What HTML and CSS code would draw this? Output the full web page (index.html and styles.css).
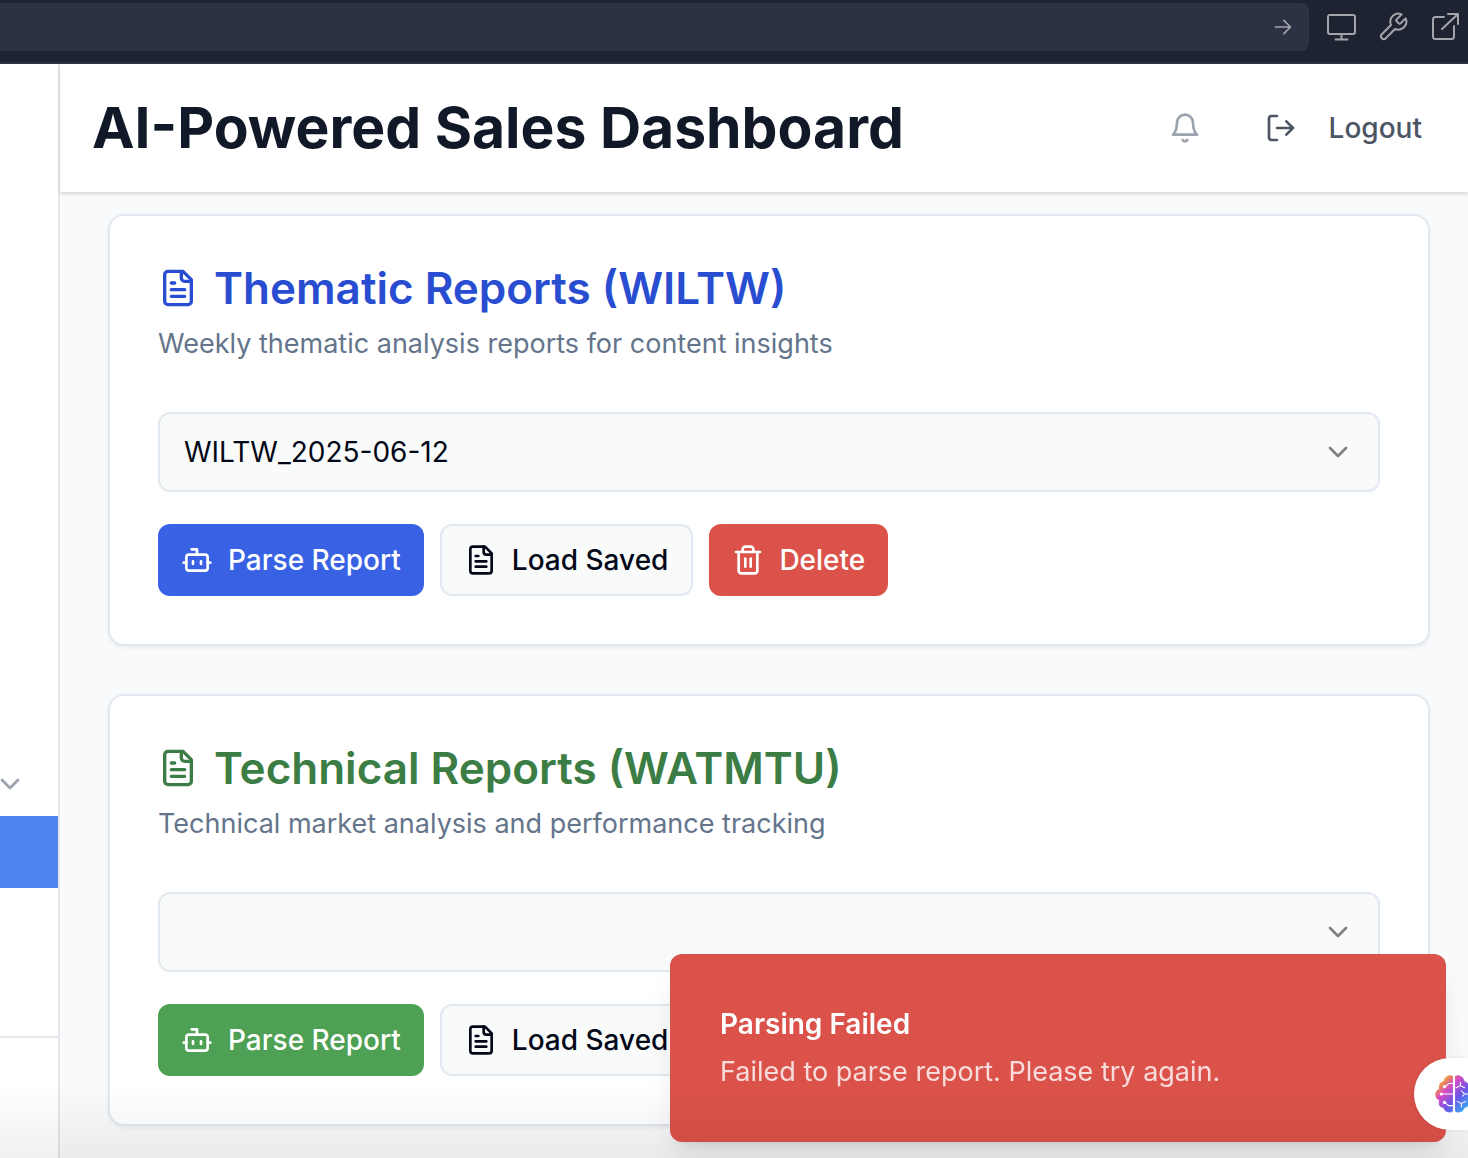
FILE: index.html
```html
<!DOCTYPE html>
<html lang="en">
<head>
<meta charset="utf-8">
<meta name="viewport" content="width=device-width, initial-scale=1">
<title>AI-Powered Sales Dashboard</title>
<link rel="stylesheet" href="styles.css">
</head>
<body>
<svg class="sprite" aria-hidden="true">
  <symbol id="file" viewBox="0 0 24 24"><path d="M15 2H6a2 2 0 0 0-2 2v16a2 2 0 0 0 2 2h12a2 2 0 0 0 2-2V7Z"/><path d="M14 2v4a2 2 0 0 0 2 2h4M10 9H8M16 13H8M16 17H8"/></symbol>
  <symbol id="bot" viewBox="0 0 24 24"><path d="M12 8V4H8"/><rect width="16" height="12" x="4" y="8" rx="2"/><path d="M2 14h2M20 14h2M15 13v2M9 13v2"/></symbol>
  <symbol id="chevron" viewBox="0 0 24 24"><path d="m6 9 6 6 6-6"/></symbol>
  <symbol id="trash" viewBox="0 0 24 24"><path d="M3 6h18M19 6v14c0 1-1 2-2 2H7c-1 0-2-1-2-2V6M8 6V4c0-1 1-2 2-2h4c1 0 2 1 2 2v2M10 11v6M14 11v6"/></symbol>
</svg>

<div class="toolbar">
  <form class="address">
    <input class="address-input" type="text" aria-label="Page address">
    <button class="address-go" type="button" aria-label="Go"><svg class="icon icon-go" viewBox="0 0 24 24"><path d="M3 12h18M13 4l8 8-8 8"/></svg></button>
  </form>
  <button class="tool" type="button" aria-label="Device preview"><svg class="icon icon-tool" viewBox="0 0 32 32"><rect x="3" y="4" width="27" height="19" rx="2"/><path d="M16.500 23v5M10.500 28.500h12"/></svg></button>
  <button class="tool" type="button" aria-label="Developer tools"><svg class="icon icon-tool" viewBox="0 0 24 24"><path d="M14.700 6.300a1 1 0 0 0 0 1.400l1.600 1.600a1 1 0 0 0 1.400 0l3.770-3.770a6 6 0 0 1-7.940 7.940l-6.910 6.910a2.120 2.120 0 0 1-3-3l6.910-6.910a6 6 0 0 1 7.940-7.940l-3.760 3.760z"/></svg></button>
  <button class="tool" type="button" aria-label="Open in new window"><svg class="icon icon-tool" viewBox="0 0 32 32"><path d="M15 6H6.500a2.500 2.500 0 0 0-2.500 2.500v17A2.500 2.500 0 0 0 6.500 28h16a2.500 2.500 0 0 0 2.500-2.500V15M19 3h10v10M29 3 13 18"/></svg></button>
</div>

<div class="app">
  <aside class="sidebar">
    <nav class="side-nav" aria-label="Sections">
      <button class="side-toggle" type="button" aria-label="Expand section"><svg class="icon icon-m"><use href="#chevron"/></svg></button>
      <a class="side-link" href="#" aria-label="Reports" aria-current="page"></a>
    </nav>
    <div class="side-foot"></div>
  </aside>

  <div class="content">
    <header class="header">
      <h1 class="title">AI-Powered Sales Dashboard</h1>
      <div class="header-actions">
        <button class="bell" type="button" aria-label="Notifications"><svg class="icon icon-m" viewBox="0 0 24 24"><path d="M6 8a6 6 0 0 1 12 0c0 7 3 9 3 9H3s3-2 3-9M10.300 21a1.940 1.940 0 0 0 3.400 0"/></svg></button>
        <button class="logout" type="button"><svg class="icon icon-m" viewBox="0 0 24 24"><path d="M9 21H5a2 2 0 0 1-2-2V5a2 2 0 0 1 2-2h4M16 17l5-5-5-5M21 12H9"/></svg>Logout</button>
      </div>
    </header>

    <main class="main">
      <section class="card">
        <h2 class="card-title blue-text"><svg class="icon icon-l"><use href="#file"/></svg>Thematic Reports (WILTW)</h2>
        <p class="card-text">Weekly thematic analysis reports for content insights</p>
        <div class="picker">
          <select class="select" aria-label="Thematic report"><option>WILTW_2025-06-12</option></select>
          <svg class="icon icon-m picker-icon"><use href="#chevron"/></svg>
        </div>
        <div class="actions">
          <button class="btn btn-blue" type="button"><svg class="icon icon-m"><use href="#bot"/></svg>Parse Report</button>
          <button class="btn btn-outline" type="button"><svg class="icon icon-m"><use href="#file"/></svg>Load Saved</button>
          <button class="btn btn-red" type="button"><svg class="icon icon-m"><use href="#trash"/></svg>Delete</button>
        </div>
      </section>

      <section class="card">
        <h2 class="card-title green-text"><svg class="icon icon-l"><use href="#file"/></svg>Technical Reports (WATMTU)</h2>
        <p class="card-text">Technical market analysis and performance tracking</p>
        <div class="picker">
          <select class="select" aria-label="Technical report"><option></option></select>
          <svg class="icon icon-m picker-icon"><use href="#chevron"/></svg>
        </div>
        <div class="actions">
          <button class="btn btn-green" type="button"><svg class="icon icon-m"><use href="#bot"/></svg>Parse Report</button>
          <button class="btn btn-outline" type="button"><svg class="icon icon-m"><use href="#file"/></svg>Load Saved</button>
        </div>
      </section>
    </main>
  </div>
</div>

<div class="toast" role="alert">
  <p class="toast-title">Parsing Failed</p>
  <p class="toast-text">Failed to parse report. Please try again.</p>
</div>
<div class="shade"></div>
<button class="assistant" type="button" aria-label="Assistant">
  <svg class="brain" viewBox="0 0 36 36">
    <defs><linearGradient id="brain-fill" x1="0" y1="0" x2="1" y2="1"><stop offset=".15" stop-color="#f5a623"/><stop offset=".35" stop-color="#d64bc4"/><stop offset=".6" stop-color="#6a55e8"/><stop offset=".9" stop-color="#35b5f5"/></linearGradient></defs>
    <path fill="url(#brain-fill)" d="M17 1v33c-3 3-8 1-9-3-4 0-5-4-4-7-5-2-5-9 0-11-1-4 1-6 4-7 1-5 6-7 9-5ZM19 1v33c3 3 8 1 9-3 4 0 5-4 4-7 5-2 5-9 0-11 1-4-1-6-4-7-1-5-6-7-9-5Z"/>
    <path class="brain-lines" d="M17 8h-4l-3 3M17 18H6M17 29h-4l-4-3M20 12l4-2 4 2M24 10V7M25 15l3 3h5M28 18l-2 2M21 25l4 2 4-2M25 27v3"/>
    <g fill="#fff"><circle cx="9" cy="11" r="1.500"/><circle cx="6" cy="18" r="1.500"/><circle cx="9" cy="26" r="1.500"/></g>
  </svg>
</button>
</body>
</html>
```
FILE: styles.css
```css
* { box-sizing: border-box; }

body {
  margin: 0;
  min-height: 100vh;
  display: flex;
  flex-direction: column;
  background: #f9fafc;
  color: #020817;
  font-family: Inter, "Liberation Sans", sans-serif;
  font-size: 28px;
  line-height: 40px;
}

h1, h2, p { margin: 0; }

button {
  border: 0;
  padding: 0;
  background: none;
  color: inherit;
  font: inherit;
  cursor: pointer;
}

.sprite { position: absolute; width: 0; height: 0; }

.icon {
  display: block;
  flex: none;
  fill: none;
  stroke: currentColor;
  stroke-width: 2;
  stroke-linecap: round;
  stroke-linejoin: round;
}
.icon-m { width: 32px; height: 32px; }
.icon-l { width: 40px; height: 40px; }
.icon-go { width: 20px; height: 20px; stroke-width: 2; }
.icon-tool { width: 32px; height: 32px; }
.icon-tool[viewBox="0 0 24 24"] { stroke-width: 1.5; }

/* Browser toolbar */
.toolbar {
  display: flex;
  align-items: flex-start;
  gap: 20px;
  height: 64px;
  padding: 3px 7px 0 0;
  border-bottom: 2px solid #2c3042;
  background: #1e2332;
  color: #a3a5aa;
}
.address {
  flex: 1;
  display: flex;
  align-items: center;
  height: 48px;
  margin-right: -4px;
  padding-right: 16px;
  border-radius: 0 8px 8px 0;
  background: #2d3144;
}
.address-input {
  flex: 1;
  min-width: 0;
  border: 0;
  outline: 0;
  background: none;
  color: inherit;
  font: inherit;
}
.tool { padding: 8px 0; }

/* Page frame */
.app { flex: 1; display: flex; }

.sidebar {
  flex: none;
  display: flex;
  flex-direction: column;
  width: 60px;
  border-right: 2px solid #e5e7eb;
  background: #fff;
}
.side-nav {
  flex: 1;
  display: flex;
  flex-direction: column;
  justify-content: flex-end;
  padding-bottom: 148px;
}
.side-toggle {
  height: 64px;
  margin-left: -6px;
  color: #9ca3af;
}
.side-link { height: 72px; background: #4f83ef; }
.side-foot { height: 122px; border-top: 2px solid #e5e7eb; }

.content { flex: 1; min-width: 0; }

.header {
  display: flex;
  align-items: center;
  justify-content: space-between;
  height: 128px;
  padding: 0 30px 0 32px;
  background: #fff;
  box-shadow: 0 2px 4px rgba(0, 0, 0, .14);
}
.title {
  color: #111827;
  font-size: 57px;
  font-weight: 700;
  line-height: 72px;
}
.header-actions { display: flex; align-items: center; gap: 32px; }
.bell { padding: 16px; color: #9ca3af; }
.logout {
  display: flex;
  align-items: center;
  gap: 32px;
  padding: 16px;
  color: #4b5563;
  font-weight: 500;
}

.main {
  display: grid;
  gap: 48px;
  padding: 22px 38px 32px 48px;
}

/* Report cards */
.card {
  padding: 48px;
  border: 2px solid #e2e8f0;
  border-radius: 16px;
  background: #fff;
  box-shadow: 0 2px 4px rgba(0, 0, 0, .05);
}
.card-title {
  display: flex;
  align-items: center;
  gap: 16px;
  font-size: 44px;
  font-weight: 600;
  line-height: 48px;
}
.blue-text { color: #294dd0; }
.green-text { color: #3b7d44; }
.card-text { margin-top: 12px; color: #64748b; font-size: 27px; }

.picker { position: relative; margin-top: 48px; }
.select {
  display: block;
  appearance: none;
  width: 100%;
  height: 80px;
  padding: 0 72px 0 24px;
  border: 2px solid #e2e8f0;
  border-radius: 12px;
  background: #f9fafa;
  color: inherit;
  font: inherit;
}
.picker-icon {
  position: absolute;
  top: 24px;
  right: 26px;
  color: #7e8084;
  pointer-events: none;
}

.actions { display: flex; gap: 16px; margin-top: 32px; }
.btn {
  display: flex;
  align-items: center;
  gap: 15px;
  height: 72px;
  padding: 0 23px;
  border-radius: 12px;
  color: #fff;
  font-weight: 500;
  white-space: nowrap;
}
.btn-blue { background: #3862e3; }
.btn-green { background: #4ea054; }
.btn-red { background: #db524a; }
.btn-outline {
  border: 2px solid #e2e8f0;
  background: #f9fafa;
  color: #020817;
}

/* Overlays */
.toast {
  position: fixed;
  right: 22px;
  bottom: 16px;
  width: 776px;
  padding: 50px;
  border-radius: 12px;
  background: #db524a;
  color: #fff;
  box-shadow: 0 20px 30px -6px rgba(0, 0, 0, .1), 0 8px 12px -8px rgba(0, 0, 0, .1);
}
.toast-title { font-weight: 600; }
.toast-text { margin-top: 8px; color: #f8dcdb; font-size: 27px; }

.shade {
  position: fixed;
  inset: auto 0 0;
  height: 72px;
  background: linear-gradient(transparent, rgba(0, 0, 0, .06));
  pointer-events: none;
}

.assistant {
  position: fixed;
  right: 0;
  bottom: 28px;
  width: 54px;
  height: 72px;
  padding-left: 21px;
  overflow: hidden;
  border-radius: 36px 0 0 36px;
  background: #fff;
  box-shadow: 0 0 4px rgba(0, 0, 0, .1);
}
.brain { display: block; width: 38px; height: 38px; }
.brain-lines { fill: none; stroke: #fff; stroke-width: 1; stroke-linecap: round; }
```
